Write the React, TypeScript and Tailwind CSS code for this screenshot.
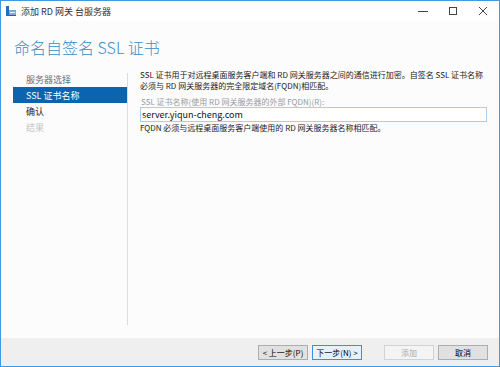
import React from "react";

const font = { fontFamily: '"Noto Sans CJK SC", "Noto Sans", sans-serif' };

const navItems = [
  { label: "服务器选择", state: "done" },
  { label: "SSL 证书名称", state: "active" },
  { label: "确认", state: "todo" },
  { label: "结果", state: "disabled" },
];

function AppIcon() {
  return (
    <svg width="10" height="10" viewBox="0 0 10 10">
      <rect x="0" y="0" width="3" height="10" fill="#1f6fbf" />
      <rect x="3" y="4" width="7" height="6" fill="#7fa9d4" />
      <rect x="4" y="6" width="5" height="1" fill="#e8f0f8" />
      <rect x="3" y="9" width="7" height="1" fill="#2c5f94" />
    </svg>
  );
}

function WindowControls() {
  return (
    <div className="flex items-center h-full">
      <div className="w-[30px] flex justify-center">
        <svg width="10" height="10" viewBox="0 0 10 10">
          <line x1="0" y1="5.5" x2="10" y2="5.5" stroke="#444" strokeWidth="1" />
        </svg>
      </div>
      <div className="w-[30px] flex justify-center">
        <svg width="10" height="10" viewBox="0 0 10 10">
          <rect x="1.5" y="1.5" width="7" height="7" fill="none" stroke="#444" strokeWidth="1" />
        </svg>
      </div>
      <div className="w-[30px] flex justify-center">
        <svg width="10" height="10" viewBox="0 0 10 10">
          <path d="M1 1 L9 9 M9 1 L1 9" stroke="#444" strokeWidth="1" />
        </svg>
      </div>
    </div>
  );
}

function Btn({ children, kind }: { children: React.ReactNode; kind: "normal" | "default" | "disabled" }) {
  const cls =
    kind === "default"
      ? "border-[#3c8fdc] bg-[#e5f1fb] text-black"
      : kind === "disabled"
      ? "border-[#d2d2d2] bg-[#f4f4f4] text-[#a8a8a8]"
      : "border-[#adadad] bg-[#e1e1e1] text-black";
  return (
    <div className={`w-[50px] h-[15px] border flex items-center justify-center text-[8px] leading-none ${cls}`}>
      {children}
    </div>
  );
}

export default function App() {
  return (
    <div
      className="w-[500px] h-[367px] border border-[#3f9ae6] bg-[#fcfcfc] flex flex-col overflow-hidden"
      style={font}
    >
      {/* title bar */}
      <div className="h-[20px] flex items-center bg-white">
        <div className="pl-[5px] pr-[5px] flex items-center">
          <AppIcon />
        </div>
        <span className="text-[9px] text-[#333] leading-none">添加 RD 网关 台服务器</span>
        <div className="ml-auto h-full pr-[1px]">
          <WindowControls />
        </div>
      </div>

      {/* main */}
      <div className="flex-1 flex flex-col">
        <h1 className="pl-[13px] pt-[16px] text-[16px] leading-[20px] text-[#3b8cc5] font-light">
          命名自签名 SSL 证书
        </h1>

        <div className="flex mt-[12px]">
          <ul className="w-[126px] pl-[12px] mt-[2px]">
            {navItems.map((item) => (
              <li
                key={item.label}
                className={`h-[16px] pl-[13px] flex items-center text-[9px] leading-none ${
                  item.state === "active"
                    ? "bg-[#0a64b0] text-white"
                    : item.state === "disabled"
                    ? "text-[#c4c4c4]"
                    : item.state === "done"
                    ? "text-[#6d6d6d]"
                    : "text-[#222]"
                }`}
              >
                {item.label}
              </li>
            ))}
          </ul>

          <div className="w-[1px] h-[252px] mt-[4px] bg-[#dcdcdc]" />

          <div className="flex-1 pl-[12px] pr-[12px] flex flex-col">
            <p className="text-[8px] leading-[11px] text-[#222]">
              SSL 证书用于对远程桌面服务客户端和 RD 网关服务器之间的通信进行加密。自签名 SSL 证书名称
              <br />
              必须与 RD 网关服务器的完全限定域名(FQDN)相匹配。
            </p>
            <label className="mt-[6px] text-[8px] leading-[10px] text-[#9a9a9a] pl-[1px]">
              SSL 证书名称(使用 RD 网关服务器的外部 FQDN)(R):
            </label>
            <div className="h-[15px] border border-[#a9cdf0] bg-white flex items-center pl-[1px]">
              <span className="text-[9px] leading-none text-[#111]">server.yiqun-cheng.com</span>
            </div>
            <p className="text-[8px] leading-[10px] text-[#222] mt-[1px]">
              FQDN 必须与远程桌面服务客户端使用的 RD 网关服务器名称相匹配。
            </p>
          </div>
        </div>
      </div>

      {/* footer */}
      <div className="h-[28px] bg-[#efefef] flex items-start pt-[7px] pr-[11px] justify-end">
        <div className="flex gap-[4px]">
          <Btn kind="normal">&lt; 上一步(P)</Btn>
          <Btn kind="default">下一步(N) &gt;</Btn>
        </div>
        <div className="flex gap-[4px] ml-[22px]">
          <Btn kind="disabled">添加</Btn>
          <Btn kind="normal">取消</Btn>
        </div>
      </div>
    </div>
  );
}
